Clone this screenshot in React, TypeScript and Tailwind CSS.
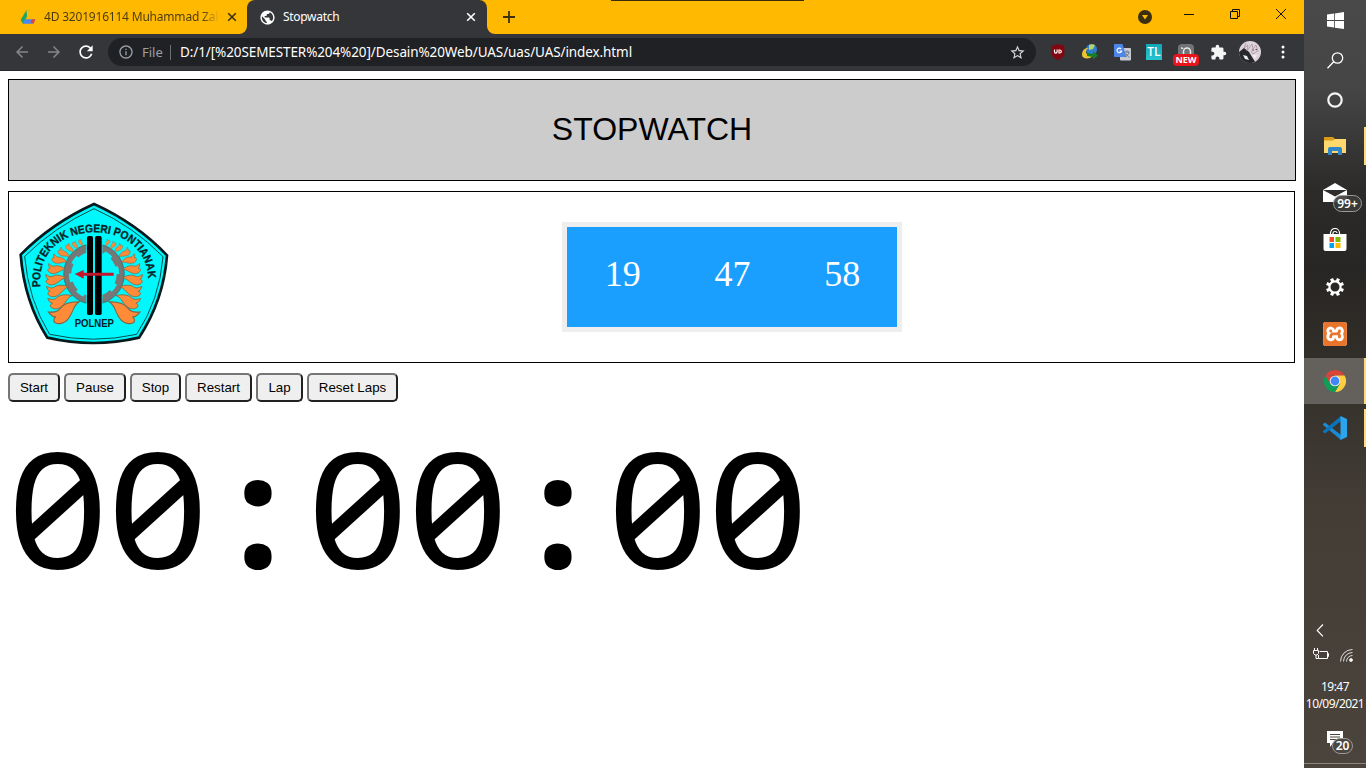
import React from "react";
import { SiXampp } from "react-icons/si";
import { MdExtension, MdRefresh, MdArrowBack, MdArrowForward, MdStarBorder, MdPublic, MdInfoOutline } from "react-icons/md";

function DriveIcon() {
  return (
    <svg width="16" height="16" viewBox="0 0 48 48" className="shrink-0">
      <path d="M19 4h10L16 33 9 44 2 33z" fill="#1fa463" />
      <path d="M19 4h9l4 8-10 12z" fill="#f5bd16" />
      <path d="M14 31h32l-6 13H8z" fill="#4687f4" />
      <path d="M35 31h11l-6 13-9-4z" fill="#e5443a" />
    </svg>
  );
}

function Cross({ color }: { color: string }) {
  return (
    <svg width="10" height="10" viewBox="0 0 10 10" className="shrink-0">
      <path d="M1.2 1.2l7.6 7.6M8.8 1.2L1.2 8.8" stroke={color} strokeWidth="1.6" />
    </svg>
  );
}

function TabStrip() {
  return (
    <div className="flex h-[34px] bg-[#ffb900]">
      <div className="flex h-[34px] w-[247px] items-center rounded-br-lg bg-[#ffb900] pl-5 pr-2">
        <DriveIcon />
        <span className="ml-2 w-[175px] whitespace-nowrap bg-gradient-to-r from-[#4a3a10] from-90% to-[#ffb900] bg-clip-text text-[12px] tracking-[-0.2px] text-transparent">
          4D 3201916114 Muhammad Zak
        </span>
        <div className="ml-[8px]">
          <Cross color="#3c3010" />
        </div>
      </div>
      <div className="relative flex w-[240px] items-center rounded-t-lg bg-[#35363a] pl-3">
        <svg width="8" height="8" className="absolute -left-2 bottom-0"><path d="M8 0v8H0a8 8 0 0 0 8-8z" fill="#35363a" /></svg>
        <svg width="8" height="8" className="absolute -right-2 bottom-0"><path d="M0 0v8h8a8 8 0 0 1-8-8z" fill="#35363a" /></svg>
        <MdPublic size={17} color="#fff" />
        <span className="ml-[7px] w-[183px] text-[12px] tracking-[-0.3px] text-white">Stopwatch</span>
        <Cross color="#fff" />
      </div>
      <svg width="12" height="12" viewBox="0 0 12 12" className="ml-4 mt-[11px]">
        <path d="M6 0v12M0 6h12" stroke="#3c3010" strokeWidth="1.8" />
      </svg>
      <div className="ml-[96px] h-px w-[193px] bg-[#3a2c08]" />
      <div className="ml-auto flex h-7 items-center">
        <svg width="14" height="14" viewBox="0 0 14 14" className="mt-[6px]">
          <circle cx="7" cy="7" r="7" fill="#3a300f" />
          <path d="M4 5h6l-3 4.4z" fill="#ffb900" />
        </svg>
        <svg width="10" height="10" className="ml-8"><path d="M0 5.5h10" stroke="#111" /></svg>
        <svg width="10" height="10" viewBox="0 0 10 10" className="ml-9" fill="none" stroke="#111">
          <path d="M.5 2.5h7v7h-7zM2.5 2.5v-2h7v7h-2" />
        </svg>
        <svg width="10" height="10" viewBox="0 0 10 10" className="ml-9 mr-[18px]">
          <path d="M0 0l10 10M10 0L0 10" stroke="#111" />
        </svg>
      </div>
    </div>
  );
}

function Extensions() {
  return (
    <div className="ml-[14px] flex items-center">
      <svg width="16" height="18" viewBox="0 0 16 18">
        <path d="M8 1l6.500 2v7c0 3-3 5.500-6.500 7C4.500 15.500 1.500 13 1.500 10V3z" fill="#800610" />
        <path d="M4.500 6.500v2.300a1.200 1.200 0 0 0 2.600 0V6.500m1.900.5v3h.8a1.500 1.500 0 0 0 0-3z" fill="none" stroke="#fff" strokeWidth="1.200" />
      </svg>
      <svg width="18" height="18" viewBox="0 0 18 18" className="ml-[15px]">
        <circle cx="10.500" cy="6.500" r="5.500" fill="#2f7fd0" />
        <path d="M8 2a6 6 0 0 1 6 0l-2 4-4 1z" fill="#b7d66a" />
        <path d="M1 12C1 7 4 4.500 8 5c-3 1-4 4-2 6l6 2-3 2c-4 1-8 0-8-3z" fill="#e9c62f" />
        <path d="M6 10l6 1V8l5 4.500-5 4v-2.500l-6-1z" fill="#128023" />
      </svg>
      <svg width="17" height="17" viewBox="0 0 17 17" className="ml-[15px]">
        <rect x="6" y="4" width="11" height="12.500" rx="1" fill="#c7cbd1" />
        <path d="M0 0h8.500l4 13H1a1 1 0 0 1-1-1z" fill="#4b86e8" />
        <path d="M7.200 5A2.300 2.300 0 1 0 7.600 7H5.500" fill="none" stroke="#fff" strokeWidth="1.200" />
        <path d="M10.500 8h5M13 6.500V8m2 0c-.5 2.500-2 4-3.500 5M12 9.500c1 2 2 3 3.500 3.800" fill="none" stroke="#697080" />
      </svg>
      <div className="ml-[15px] flex h-4 w-4 items-center justify-center bg-gradient-to-b from-[#12a5ba] to-[#27c6cf] font-['Open_Sans',sans-serif] text-[12px] font-semibold text-white">TL</div>
      <div className="relative ml-4 h-[17px] w-4 rounded-sm bg-[#717477]">
        <svg width="16" height="12" viewBox="0 0 16 12" className="block"><path d="M3 4h1.500M5.500 11V7.500a3.500 3.500 0 0 1 7 0V11M4.500 4v1" fill="none" stroke="#e6e6e6" strokeWidth="1.500" /></svg>
        <span className="absolute -left-[5px] top-[10px] flex h-3 w-[26px] items-center justify-center rounded-sm bg-[#e8141c] text-[9px] font-bold text-white">NEW</span>
      </div>
      <MdExtension size={17} color="#f5f5f5" className="ml-4" />
      <svg width="22" height="22" viewBox="0 0 22 22" className="ml-[12px]">
        <circle cx="11" cy="11" r="11" fill="#ddd3d8" />
        <path d="M0 11l5-4 5 4 3 5 3 4.800a11 11 0 0 1-16-9.800z" fill="#28272b" />
        <path d="M7 2l-2 5 4-3-1 6 5-7 1 5 3-4 2 7M12 10l2 3 4-3" fill="none" stroke="#a497a3" strokeWidth=".8" />
        <path d="M13 9h2M16.500 8.500h1.500" stroke="#704350" />
        <path d="M4 14l4 1 2 4-4-1zM13 14l5 0-2 4z" fill="#eee" />
      </svg>
      <svg width="4" height="14" viewBox="0 0 4 14" className="ml-[20px]" fill="#fff">
        <circle cx="2" cy="2" r="1.500" /><circle cx="2" cy="7" r="1.500" /><circle cx="2" cy="12" r="1.500" />
      </svg>
    </div>
  );
}

function Toolbar() {
  return (
    <div className="flex h-[37px] items-center border-b border-[#28292c] bg-[#35363a] pl-[13px]">
      <MdArrowBack size={18} color="#85868a" />
      <MdArrowForward size={18} color="#85868a" className="ml-[14px]" />
      <MdRefresh size={20} color="#fff" className="ml-[13px]" />
      <div className="ml-3 flex h-7 w-[928px] items-center rounded-full bg-[#202124] pl-[10px] pr-[10px]">
        <MdInfoOutline size={16} color="#9aa0a6" />
        <span className="ml-2 w-[21px] whitespace-nowrap pt-px text-[13px] text-[#9aa0a6]">File</span>
        <span className="ml-[7px] h-[15px] w-px bg-[#6c7075]" />
        <span className="ml-[9px] whitespace-nowrap pt-px text-[13.500px] tracking-[-0.1px] text-white">D:/1/[%20SEMESTER%204%20]/Desain%20Web/UAS/uas/UAS/index.html</span>
        <MdStarBorder size={17} color="#d5d7da" className="ml-auto" />
      </div>
      <Extensions />
    </div>
  );
}

const leaves = [
  [153, 359, 1.1, -12], [140, 322, 0.84, 0], [132, 288, 0.76, 8], [126, 254, 0.7, 16],
  [130, 222, 0.62, 26], [140, 193, 0.54, 40], [156, 172, 0.45, 56], [176, 157, 0.36, 70], [194, 148, 0.3, 82], [211, 140, 0.25, 90],
];

function Leaves() {
  return (
    <>
      {leaves.map(([x, y, s, r]) => (
        <path key={y} transform={`translate(${x} ${y}) rotate(${r}) scale(${s})`} d="M-32-14C-20-12-12-6 0-16 12-28 34-29 56-24 38-18 36-4 24 8 10 25-8 27-20 18-26 12-20 5-15 3-26 2-28-8-32-14z" fill="#ff8b38" stroke="#806240" strokeWidth="3" />
      ))}
    </>
  );
}

function Emblem() {
  return (
    <svg width="170" height="160" viewBox="0 0 510 480" className="shrink-0">
      <path d="M252 27Q380 85 471 181 461 315 387 428 250 460 112 428 43 320 32 179 126 84 252 27z" fill="#00f7fb" stroke="#07191c" strokeWidth="8" />
      <path d="M252 41Q370 94 459 185 449 313 380 418 250 447 119 418 55 315 44 184 133 96 252 41z" fill="none" stroke="#064d50" strokeWidth="3" />
      <circle cx="252" cy="237" r="83" fill="none" stroke="#777" strokeWidth="15" />
      <circle cx="252" cy="237" r="73" fill="none" stroke="#777" strokeWidth="10" strokeDasharray="31 26.300" />
      <circle cx="252" cy="237" r="91" fill="none" stroke="#355" strokeWidth="2" />
      <Leaves />
      <g transform="translate(505 0) scale(-1 1)"><Leaves /></g>
      <rect x="229" y="124" width="48" height="234" fill="#00f7fb" />
      <rect x="231" y="123" width="18" height="237" rx="5" fill="#000" />
      <rect x="255" y="123" width="20" height="237" rx="5" fill="#000" />
      <path d="M194 237l27-12v8h90v9h-90v9z" fill="#c3152b" />
      <path id="motto" d="M91 276C82 182 145 112 253 112S423 182 414 276" fill="none" />
      <text className="font-['Liberation_Sans',sans-serif] text-[34px] font-bold" fill="#062226" stroke="#062226" strokeWidth="1">
        <textPath href="#motto" textLength="502" lengthAdjust="spacingAndGlyphs">POLITEKNIK NEGERI PONTIANAK</textPath>
      </text>
      <text x="194" y="395" textLength="118" lengthAdjust="spacingAndGlyphs" className="font-['Liberation_Sans',sans-serif] text-[30px] font-bold" fill="#062226">POLNEP</text>
    </svg>
  );
}

function OutsetButton({ label, width }: { label: string; width: string }) {
  return (
    <button className={`${width} h-[29px] whitespace-nowrap rounded-[5px] border-2 border-t-[#767676] border-l-[#767676] border-b-[#212121] border-r-[#212121] bg-[#efefef] text-[13.333px] leading-none text-black`}>
      {label}
    </button>
  );
}

const glyphs = ["0", "0", ":", "0", "0", ":", "0", "0"];

function Page() {
  return (
    <main className="flex-1 bg-white px-2 pt-2 font-['Liberation_Sans',Arial,sans-serif]">
      <header className="flex h-[102px] items-center justify-center border border-black bg-[#ccc] pb-0.5 text-[32px] leading-none text-black">STOPWATCH</header>
      <section className="mt-[10px] flex h-[172px] w-[1287px] border border-black pl-px pt-[3px]">
        <Emblem />
        <div className="ml-[382px] mt-[27px] grid h-[110px] w-[340px] grid-cols-3 border-[5px] border-[#eee] bg-[#1a9fff] pl-px text-center font-['Liberation_Serif',serif] text-[36px] leading-[94px] text-white">
          <span>19</span><span>47</span><span>58</span>
        </div>
      </section>
      <div className="mt-[10px] flex gap-1">
        <OutsetButton label="Start" width="w-[52px]" />
        <OutsetButton label="Pause" width="w-[62px]" />
        <OutsetButton label="Stop" width="w-[51px]" />
        <OutsetButton label="Restart" width="w-[67px]" />
        <OutsetButton label="Lap" width="w-[47px]" />
        <OutsetButton label="Reset Laps" width="w-[91px]" />
      </div>
      <div className="mt-[24px] flex font-['Noto_Sans',sans-serif] text-[161px] leading-[160px] text-black">
        {glyphs.map((g, i) => (
          <span key={i} className={g === ":" ? "flex w-[100px] justify-center pt-px text-[158px] font-bold" : "flex w-[100px] scale-x-[1.1] justify-center [font-feature-settings:'zero']"}>{g}</span>
        ))}
      </div>
    </main>
  );
}

function Slot({ children, active, mark }: { children: React.ReactNode; active?: boolean; mark?: string }) {
  return (
    <div className={`relative flex h-[46px] items-center justify-center ${active ? "bg-[#64605b]" : ""}`}>
      {children}
      {mark && <span className={`absolute right-0 w-[2px] bg-[#ffdc78] ${mark}`} />}
    </div>
  );
}

function Taskbar() {
  return (
    <aside className="flex h-[768px] w-[62px] flex-col bg-[linear-gradient(180deg,#494949_0px,#454545_90px,#2c2b2a_190px,#282624_270px,#36322c_400px,#433d36_510px,#4b443d_768px)] font-['Noto_Sans',sans-serif] text-white">
      <div className="flex h-10 items-center justify-center">
        <svg width="17" height="17" viewBox="0 0 17 17" fill="#fff"><path d="M0 2.500l7-1v6.600H0zM7.800 1.400L17 0v8.100H7.800zM0 8.900h7v6.600l-7-1zM7.800 8.900H17V17l-9.200-1.300z" /></svg>
      </div>
      <div className="flex h-10 items-center justify-center">
        <svg width="17" height="17" viewBox="0 0 17 17" fill="none" stroke="#fff" strokeWidth="1.300"><circle cx="10.500" cy="6" r="5.200" /><path d="M6.700 9.800L.5 16.300" /></svg>
      </div>
      <div className="flex h-10 items-center justify-center">
        <svg width="16" height="16" viewBox="0 0 16 16"><circle cx="8" cy="8" r="6.700" fill="none" stroke="#f5f5f5" strokeWidth="2.200" /></svg>
      </div>
      <div className="mt-[3px] flex flex-col gap-px">
        <Slot mark="top-1 h-[38px]">
          <svg width="22" height="18" viewBox="0 0 22 18">
            <path d="M0 0h9l2 2v3H0z" fill="#d99a17" /><path d="M0 3.500h9L11 2h11v14H0z" fill="#ffd96e" />
            <path d="M4 18v-6a2 2 0 0 1 2-2h10a2 2 0 0 1 2 2v6h-4v-4H8v4z" fill="#2f86c9" />
          </svg>
        </Slot>
        <Slot>
          <svg width="24" height="20" viewBox="0 0 24 20"><path d="M0 7l12-7 12 7v12H0z" fill="#fff" /><path d="M0 7h24L12 13.500z" fill="#2e2d2b" /></svg>
          <span className="absolute left-[29px] top-[25px] flex h-[17px] w-[29px] items-center justify-center rounded-full border border-[#999] bg-[#3c3b39]/90 text-[12px] font-semibold">99+</span>
        </Slot>
        <Slot>
          <svg width="24" height="24" viewBox="0 0 24 24">
            <path d="M7.500 6V5a4.500 4.500 0 0 1 9 0v2M10 6V5c0-2 4-2 4 0" fill="none" stroke="#fff" strokeWidth="1.200" />
            <path d="M.5 6h23v15a2 2 0 0 1-2 2h-19a2 2 0 0 1-2-2z" fill="#fff" />
            <path d="M6.500 9H11v5H6.500z" fill="#f25022" /><path d="M12.500 9h5v5h-5z" fill="#7fba00" />
            <path d="M6.500 15H11v5H6.500z" fill="#00a4ef" /><path d="M12.500 15h5v5h-5z" fill="#ffb900" />
          </svg>
        </Slot>
        <Slot>
          <svg width="20" height="20" viewBox="-10 -10 20 20">
            {[0, 45, 90, 135, 180, 225, 270, 315].map((a) => <path key={a} transform={`rotate(${a + 22.5})`} d="M-1.600-9h3.200v3.500h-3.200z" fill="#fff" />)}
            <circle r="5.600" fill="none" stroke="#fff" strokeWidth="2.200" />
          </svg>
        </Slot>
        <Slot>
          <div className="flex h-6 w-6 items-center justify-center rounded-[3px] bg-white"><SiXampp size={24} color="#e8752b" /></div>
        </Slot>
        <Slot active mark="top-0 h-[46px]">
          <svg width="22" height="22" viewBox="-11 -11 22 22">
            <path d="M-9.530-5.500A11 11 0 0 1 9.530-5.500H0z" fill="#db4437" />
            <path d="M9.530-5.500A11 11 0 0 1 0 11L4.760 2.700 0-5.500z" fill="#ffcd40" />
            <path d="M0 11A11 11 0 0 1-9.530-5.500L-4.760 2.700 4.760 2.700z" fill="#0f9d58" />
            <path d="M-9.530-5.500L-4.760 2.700 0-5z" fill="#db4437" />
            <circle r="5.300" fill="#f1f1f1" /><circle r="4.400" fill="#4285f4" />
          </svg>
        </Slot>
        <Slot mark="top-1 h-[38px]">
          <svg width="24" height="24" viewBox="0 0 24 24">
            <path d="M0 8l2-1.500L18 19v5L0 9z" fill="#1b8ad3" /><path d="M0 16l2 1.500L18 5V0L0 15z" fill="#0b74b8" /><path d="M17.500 0L24 3v18l-6.500 3z" fill="#2ba5ee" />
          </svg>
        </Slot>
      </div>
      <div className="mt-auto flex h-[145px] flex-col">
        <svg width="8" height="13" viewBox="0 0 8 13" className="ml-3 mt-px"><path d="M7 .5L1.200 6.500 7 12.500" fill="none" stroke="#fff" strokeWidth="1.200" /></svg>
        <div className="mt-[11px] flex h-[15px] items-center gap-[11px] pl-[9px]">
          <svg width="16" height="14" viewBox="0 0 16 14" fill="none" stroke="#fff"><path d="M6.500 3.500h8v7h-9M14.500 5.500h1v3h-1M1.500 0v2.500M4.500 0v2.500M.5 2.500h5v3l-1.500 1.500H2L.5 5.500zM3 7v3.500h2.500V7" /></svg>
          <svg width="13" height="13" viewBox="0 0 13 13" fill="none" stroke="#ddd"><path d="M.5 12.500a12 12 0 0 1 12-12M3.500 12.500a9 9 0 0 1 9-9M6.500 12.500a6 6 0 0 1 6-6" /><circle cx="11" cy="11" r="1.500" fill="#fff" /></svg>
        </div>
        <div className="mt-[15px] flex flex-col items-center whitespace-nowrap text-[12px] leading-[17px] tracking-[-0.55px]"><span>19:47</span><span>10/09/2021</span></div>
        <div className="relative mt-[19px] h-[33px]">
          <svg width="16" height="16" viewBox="0 0 16 16" className="ml-[23px]"><path d="M0 0h16v12H6l-3 4v-4H0z" fill="#fff" /><path d="M3 3.500h10M3 6h10M3 8.500h7" stroke="#4b443d" /></svg>
          <span className="absolute left-7 top-[7px] flex h-4 w-[21px] items-center justify-center rounded-full border border-[#999] bg-[#4b4640] text-[12px] font-semibold">20</span>
        </div>
        <div className="h-px bg-[#8a857f]" />
        <div className="h-1" />
      </div>
    </aside>
  );
}

export default function App() {
  return (
    <div className="flex h-[768px] w-[1366px] overflow-hidden bg-white">
      <div className="flex w-[1304px] flex-col font-['Noto_Sans',sans-serif]">
        <TabStrip />
        <Toolbar />
        <Page />
      </div>
      <Taskbar />
    </div>
  );
}
